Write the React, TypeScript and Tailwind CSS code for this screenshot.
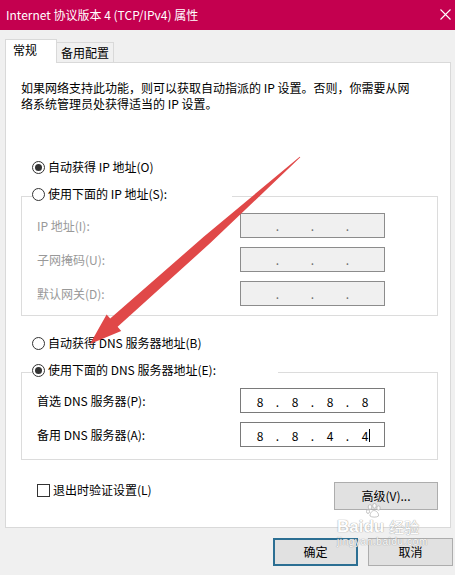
import React from "react";

function Radio({ checked }: { checked?: boolean }) {
  return (
    <span className="flex h-[13px] w-[13px] shrink-0 items-center justify-center rounded-full border border-[#333333] bg-white">
      {checked && <span className="h-[7px] w-[7px] rounded-full bg-[#333333]" />}
    </span>
  );
}

function IpBox({ octets, disabled, caret }: { octets: string[]; disabled?: boolean; caret?: boolean }) {
  const cells: React.ReactNode[] = [];
  octets.forEach((o, i) => {
    const last = i === octets.length - 1;
    cells.push(
      <span key={"o" + i} className="flex w-[26px] justify-center">
        {o}
        {last && caret && (
          <span className="relative w-0">
            <span className="absolute left-[1px] top-[1px] h-[13px] w-px bg-black" />
          </span>
        )}
      </span>
    );
    if (!last) {
      cells.push(
        <span key={"d" + i} className={"w-[9px] text-center " + (disabled ? "text-[#6d6d6d]" : "text-black")}>
          .
        </span>
      );
    }
  });
  return (
    <div
      className={
        disabled
          ? "flex h-[25px] w-[145px] items-center border border-[#8c8c8c] bg-[#f0f0f0] pl-[6px]"
          : "flex h-[25px] w-[145px] items-center border border-[#7a7a7a] bg-white pl-[6px] pt-[3px]"
      }
    >
      {cells}
    </div>
  );
}

const blank = ["", "", "", ""];

export default function App() {
  return (
    <div className="relative h-[575px] w-[455px] overflow-hidden bg-[#f0f0f0] font-['Noto_Sans_CJK_SC','Noto_Sans',sans-serif] text-[12px] leading-[16px] text-black">
      {/* title bar */}
      <div className="flex h-[30px] items-center justify-between bg-[#c4004f] pl-[6px] pr-[4px] text-white">
        <span>Internet 协议版本 4 (TCP/IPv4) 属性</span>
        <svg width="11" height="11" viewBox="0 0 11 11" className="mt-[-1px]">
          <path d="M0.5 0.5 L10.5 10.5 M10.5 0.5 L0.5 10.5" stroke="#ffffff" strokeWidth="1.1" fill="none" />
        </svg>
      </div>

      {/* tabs */}
      <div className="flex h-[32px] items-end pl-[5px]">
        <div className="relative z-10 -mb-px h-[24px] w-[52px] border border-b-0 border-[#d9d9d9] bg-white pl-[7px] pt-[2px]">
          常规
        </div>
        <div className="h-[20px] w-[57px] border-r border-t border-[#d9d9d9] bg-[#f0f0f0] pl-[4px] pt-[2px]">
          备用配置
        </div>
      </div>

      {/* panel */}
      <div className="ml-[5px] w-[446px] border border-[#d9d9d9] bg-white pb-[17px] pl-[15px] pr-[12px] pt-[17px]">
        <p>
          如果网络支持此功能，则可以获取自动指派的 IP 设置。否则，你需要从网
          <br />
          络系统管理员处获得适当的 IP 设置。
        </p>

        <div className="ml-[11px] mt-[47px] flex h-[16px] items-center gap-[3px]">
          <Radio checked />
          <span>自动获得 IP 地址(O)</span>
        </div>

        <fieldset className="mt-[11px] border border-[#dcdcdc] p-0">
          <legend className="ml-[10px] w-[200px] pb-[4px]">
            <div className="flex h-[16px] items-center gap-[3px]">
              <Radio />
              <span>使用下面的 IP 地址(S):</span>
            </div>
          </legend>
          <div className="grid grid-cols-[203px_145px] items-center gap-y-[9px] pb-[9px] pl-[15px] pt-[7px] text-[#999999]">
            <span>IP 地址(I):</span>
            <IpBox octets={blank} disabled />
            <span>子网掩码(U):</span>
            <IpBox octets={blank} disabled />
            <span>默认网关(D):</span>
            <IpBox octets={blank} disabled />
          </div>
        </fieldset>

        <div className="ml-[11px] mt-[19px] flex h-[16px] items-center gap-[3px]">
          <Radio />
          <span>自动获得 DNS 服务器地址(B)</span>
        </div>

        <fieldset className="mt-[11px] border border-[#dcdcdc] p-0">
          <legend className="ml-[10px] w-[246px] pb-[4px]">
            <div className="flex h-[16px] items-center gap-[3px]">
              <Radio checked />
              <span>使用下面的 DNS 服务器地址(E):</span>
            </div>
          </legend>
          <div className="grid grid-cols-[203px_145px] items-center gap-y-[9px] pb-[12px] pl-[15px] pt-[6px]">
            <span>首选 DNS 服务器(P):</span>
            <IpBox octets={["8", "8", "8", "8"]} />
            <span>备用 DNS 服务器(A):</span>
            <IpBox octets={["8", "8", "4", "4"]} caret />
          </div>
        </fieldset>

        <div className="mt-[22px] flex items-start justify-between">
          <div className="ml-[16px] flex h-[16px] items-center gap-[3px]">
            <span className="h-[13px] w-[13px] border border-[#333333] bg-white" />
            <span>退出时验证设置(L)</span>
          </div>
          <button className="h-[28px] w-[104px] border border-[#adadad] bg-[#e1e1e1]">高级(V)...</button>
        </div>
      </div>

      {/* dialog buttons */}
      <div className="mt-[10px] flex justify-end gap-[10px] pr-[2px]">
        <button className="h-[28px] w-[85px] border-2 border-[#2c6f93] bg-[#e1e1e1]">确定</button>
        <button className="h-[28px] w-[85px] border border-[#adadad] bg-[#e1e1e1]">取消</button>
      </div>

      {/* baidu watermark */}
      <div className="pointer-events-none absolute left-[337px] top-[518px] text-white opacity-90 [text-shadow:0_0_1px_#9a9a9a,0_0_1px_#9a9a9a]">
        <div className="flex items-end font-['Liberation_Sans',sans-serif] text-[17px] font-bold leading-[18px]">
          <span>Bai</span>
          <span className="relative">
            du
            <svg width="16" height="15" viewBox="0 0 16 15" className="absolute left-[3px] top-[-15px]">
              <g fill="#ffffff" stroke="#b0b0b0" strokeWidth="0.8">
                <ellipse cx="4" cy="4" rx="1.8" ry="2.4" />
                <ellipse cx="8.5" cy="2.8" rx="1.8" ry="2.4" />
                <ellipse cx="12.5" cy="5" rx="1.7" ry="2.2" />
                <ellipse cx="2" cy="8.5" rx="1.5" ry="2" />
                <path d="M4 13 C4 9 7 7.5 8 7.5 C10 7.5 13 10 12.5 13 C11 14.5 5.5 14.5 4 13 Z" />
              </g>
            </svg>
          </span>
          <span className="ml-[5px] font-['Noto_Sans_CJK_SC',sans-serif] text-[15px] font-normal">经验</span>
        </div>
        <div className="font-['Liberation_Sans',sans-serif] text-[10px] leading-[12px] tracking-[0.6px]">jingyan.baidu.com</div>
      </div>

      {/* red arrow annotation */}
      <svg width="455" height="575" viewBox="0 0 455 575" className="pointer-events-none absolute left-0 top-0">
        <path
          d="M300.3 157.3 L210 243.3 L117.6 326.8 L121.2 330.9 L90 344 L106.6 314.5 L110.2 318.6 L204 236.5 L299.7 156.7 Z"
          fill="#e04848"
        />
      </svg>
    </div>
  );
}
